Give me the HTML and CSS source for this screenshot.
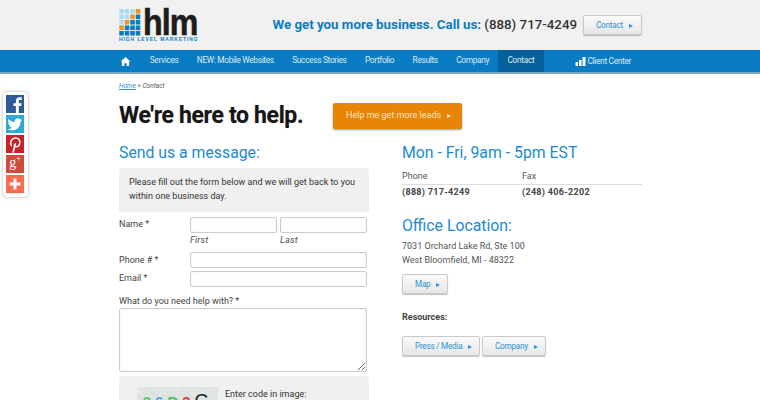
FILE: index.html
```html
<!DOCTYPE html>
<html lang="en">
<head>
    <meta charset="UTF-8">
    <title>Contact - High Level Marketing</title>
    <link rel="stylesheet" href="styles.css">
</head>
<body>
    <!-- share buttons float over the left margin -->
    <aside class="share">
        <a class="share-btn fb" href="#"><svg viewBox="0 0 18 18"><path d="M12.800 18v-7h2.400l.4-2.800h-2.800V6.300c0-.8.3-1.300 1.400-1.300h1.500V2.300c-.4 0-1.200-.1-2.100-.1-2.200 0-3.700 1.300-3.700 3.700v2.300H7.500V11h2.400v7z" fill="#fff"/></svg></a>
        <a class="share-btn tw" href="#"><svg viewBox="0 0 18 18"><path d="M16 4.700c-.5.200-1.100.4-1.700.5.600-.4 1.100-.9 1.300-1.600-.6.300-1.200.6-1.900.7a3 3 0 0 0-5.100 2.700C6.100 6.900 3.900 5.700 2.500 4c-.8 1.300-.4 3.100.9 4-.5 0-.9-.1-1.300-.4 0 1.400 1 2.700 2.400 3-.4.100-.9.100-1.300 0 .4 1.200 1.500 2 2.800 2.100A6 6 0 0 1 1.500 14c1.300.8 2.900 1.300 4.600 1.300 5.600 0 8.700-4.700 8.500-8.900.6-.4 1-.9 1.400-1.700z" fill="#fff"/></svg></a>
        <a class="share-btn pin" href="#"><svg viewBox="0 0 18 18"><path d="M7.200 17l2-8.300M5.300 10.500C3.500 7 5.800 3 9.500 3c2.900 0 4.500 2 4.300 4.500-.2 2.500-1.600 4.300-3.500 4.300-1.100 0-1.900-.7-2-1.500" fill="none" stroke="#fff" stroke-width="1.600" stroke-linecap="round"/></svg></a>
        <a class="share-btn gp" href="#">g<sup>+</sup></a>
        <a class="share-btn more" href="#"><svg viewBox="0 0 18 18"><path d="M7.500 3.500h3v4h4v3h-4v4h-3v-4h-4v-3h4z" fill="#fff"/></svg></a>
    </aside>

    <header class="top">
        <div class="wrap top-inner">
            <a class="logo" href="#">
                <div class="logo-row">
                    <svg class="logo-grid" width="22" height="27" viewBox="0 0 23.500 29.500">
                        <g fill="#a9dcf2">
                            <rect x="0" y="0" width="5" height="5"/><rect x="6" y="0" width="5" height="5"/><rect x="12" y="0" width="5" height="5"/>
                            <rect x="0" y="6" width="5" height="5"/><rect x="6" y="6" width="5" height="5"/>
                            <rect x="0" y="12" width="5" height="5"/>
                        </g>
                        <g fill="#f0961c">
                            <rect x="18" y="0" width="5" height="5"/><rect x="12" y="6" width="5" height="5"/><rect x="6" y="12" width="5" height="5"/><rect x="0" y="18" width="5" height="5"/>
                        </g>
                        <g fill="#0a7cc4">
                            <rect x="18" y="6" width="5" height="5"/><rect x="12" y="12" width="5" height="5"/><rect x="18" y="12" width="5" height="5"/>
                            <rect x="6" y="18" width="5" height="5"/><rect x="12" y="18" width="5" height="5"/><rect x="18" y="18" width="5" height="5"/>
                            <rect x="0" y="24" width="5" height="5"/><rect x="6" y="24" width="5" height="5"/><rect x="12" y="24" width="5" height="5"/><rect x="18" y="24" width="5" height="5"/>
                        </g>
                    </svg>
                    <span class="logo-word">hlm</span>
                </div>
                <div class="logo-tag">HIGH LEVEL MARKETING</div>
            </a>
            <div class="top-right">
                <p class="callout">We get you more business. Call us: <span class="callout-num">(888) 717-4249</span></p>
                <a class="btn btn-top" href="#">Contact<i class="arrow"></i></a>
            </div>
        </div>
    </header>

    <nav class="navbar">
        <div class="wrap nav-inner">
            <a class="nav-home" href="#"><svg width="11" height="9" viewBox="0 0 12 11"><path d="M6 0L0 5.500h1.600V11h3V7.500h2.800V11h3V5.500H12z" fill="#fff"/></svg></a>
            <a class="nav-link" href="#">Services</a>
            <a class="nav-link" href="#">NEW: Mobile Websites</a>
            <a class="nav-link" href="#">Success Stories</a>
            <a class="nav-link" href="#">Portfolio</a>
            <a class="nav-link" href="#">Results</a>
            <a class="nav-link" href="#">Company</a>
            <a class="nav-link active" href="#">Contact</a>
            <a class="nav-client" href="#"><svg width="11" height="9" viewBox="0 0 10 9"><path d="M0 5h2.500v4H0zM3.500 3H6v6H3.500zM7 0h3v9H7z" fill="#fff"/></svg>Client Center</a>
        </div>
    </nav>

    <main class="wrap">
        <div class="crumbs"><a href="#">Home</a> &gt; Contact</div>
        <div class="title-row">
            <h1>We're here to help.</h1>
            <a class="btn-leads" href="#">Help me get more leads<i class="arrow"></i></a>
        </div>
        <div class="columns">
            <section class="col-left">
                <h2>Send us a message:</h2>
                <div class="intro">Please fill out the form below and we will get back to you within one business day.</div>
                <form>
                    <div class="form-row name-row">
                        <label>Name *</label>
                        <div class="name-field"><input type="text"><em>First</em></div>
                        <div class="name-field"><input type="text"><em>Last</em></div>
                    </div>
                    <div class="form-row phone-row">
                        <label>Phone # *</label>
                        <input type="text">
                    </div>
                    <div class="form-row email-row">
                        <label>Email *</label>
                        <input type="text">
                    </div>
                    <label class="help-label">What do you need help with? *</label>
                    <textarea></textarea>
                    <div class="captcha">
                        <div class="captcha-img"><span class="c1">2</span><span class="c2">6</span><span class="c3">D</span><span class="c4">3</span><span class="c5">C</span></div>
                        <span>Enter code in image:</span>
                    </div>
                </form>
            </section>
            <section class="col-right">
                <h2>Mon - Fri, 9am - 5pm EST</h2>
                <div class="contact-table">
                    <div class="contact-head"><span>Phone</span><span>Fax</span></div>
                    <div class="contact-nums"><span>(888) 717-4249</span><span>(248) 406-2202</span></div>
                </div>
                <h2 class="office">Office Location:</h2>
                <p class="address">7031 Orchard Lake Rd, Ste 100<br>West Bloomfield, MI - 48322</p>
                <a class="btn btn-map" href="#">Map<i class="arrow"></i></a>
                <h3>Resources:</h3>
                <div class="res-btns">
                    <a class="btn btn-press" href="#">Press / Media<i class="arrow"></i></a>
                    <a class="btn btn-company" href="#">Company<i class="arrow"></i></a>
                </div>
            </section>
        </div>
    </main>
</body>
</html>
```

FILE: styles.css
```css
* {
    margin: 0;
    padding: 0;
    box-sizing: border-box;
}

html, body {
    height: 400px;
    overflow: hidden;
}

body {
    font-family: Roboto, "Liberation Sans", sans-serif;
    font-size: 9px;
    line-height: 14px;
    color: #444;
    background-color: #fff;
}

a {
    text-decoration: none;
}

.wrap {
    width: 523px;
    margin-left: 119px;
}

/* header */
.top {
    height: 50px;
    background-color: #f1f1f1;
}

.top-inner {
    display: flex;
    justify-content: space-between;
    padding-top: 9px;
}

.logo {
    display: block;
    width: 80px;
}

.logo-row {
    display: flex;
    height: 27px;
}

.logo-grid {
    flex: none;
}

.logo-word {
    font-family: "Liberation Sans", sans-serif;
    font-weight: bold;
    font-size: 37px;
    line-height: 27px;
    letter-spacing: -1px;
    color: #1d1d1d;
    margin-left: 2px;
    transform: scaleX(0.87);
    transform-origin: left center;
    -webkit-text-stroke: 0.6px #1d1d1d;
}

.logo-tag {
    font-family: "Liberation Sans", sans-serif;
    font-weight: bold;
    font-size: 5px;
    line-height: 5px;
    letter-spacing: 0.9px;
    color: #0a7cc4;
    margin-top: 1px;
    white-space: nowrap;
}

.top-right {
    display: flex;
    align-items: flex-start;
    gap: 6px;
}

.callout {
    font-size: 13.3px;
    font-weight: 700;
    line-height: 32px;
    color: #0a7cc4;
    white-space: nowrap;
}

.callout-num {
    color: #333;
    font-weight: 500;
}

/* buttons */
.btn {
    display: inline-block;
    height: 20px;
    line-height: 18px;
    font-size: 8.2px;
    letter-spacing: -0.25px;
    color: #2a93d5;
    background: linear-gradient(#fbfbfb, #e6e6e6);
    border: 1px solid #c9c9c9;
    border-radius: 2px;
    box-shadow: 0 1px 1px rgba(0, 0, 0, 0.25);
    white-space: nowrap;
}

.arrow {
    display: inline-block;
    margin-left: 6px;
    border-left: 4px solid currentColor;
    border-top: 2.5px solid transparent;
    border-bottom: 2.5px solid transparent;
}

.btn-top {
    width: 59px;
    margin-top: 6px;
    padding-left: 12px;
}

.btn-map {
    display: block;
    width: 46px;
    margin-top: 7px;
    padding-left: 12px;
}

.btn-press {
    width: 78px;
    padding-left: 12px;
}

.btn-company {
    width: 64px;
    padding-left: 12px;
}

/* nav */
.navbar {
    height: 24px;
    background-color: #0a7cc4;
    border-bottom: 2px solid #7aa6c2;
}

.nav-inner {
    display: flex;
    height: 22px;
}

.nav-home {
    display: flex;
    align-items: center;
    padding-left: 1px;
    width: 21.5px;
}

.nav-link {
    padding: 0 9.2px;
    line-height: 21px;
    font-size: 8.3px;
    letter-spacing: -0.31px;
    color: #dcebf5;
    white-space: nowrap;
}

.nav-link.active {
    background-color: #05609b;
}

.nav-client {
    display: flex;
    align-items: center;
    gap: 2px;
    margin-left: 31px;
    font-size: 8.3px;
    letter-spacing: -0.31px;
    color: #dcebf5;
    white-space: nowrap;
}

/* title area */
.crumbs {
    margin-top: 7px;
    font-size: 6.5px;
    line-height: 11px;
    font-style: italic;
    color: #555;
}

.crumbs a {
    color: #2a93d5;
    text-decoration: underline;
}

.title-row {
    display: flex;
    align-items: center;
    margin-top: 10px;
    height: 27px;
}

h1 {
    font-size: 23px;
    line-height: 27px;
    font-weight: 700;
    letter-spacing: -0.35px;
    color: #161616;
    text-shadow: 0 0 1px rgba(0, 0, 0, 0.3);
    width: 214px;
    white-space: nowrap;
}

.btn-leads {
    display: block;
    width: 129px;
    height: 26px;
    padding-left: 13px;
    line-height: 25px;
    font-size: 9px;
    color: #fbe6cc;
    background-color: #e88504;
    border-radius: 2px;
    box-shadow: 0 1px 2px rgba(0, 0, 0, 0.4);
    white-space: nowrap;
}

/* columns */
.columns {
    display: flex;
    gap: 33px;
    margin-top: 11px;
}

.col-left {
    width: 250px;
    flex: none;
}

.col-right {
    flex: 1;
}

h2 {
    height: 24px;
    font-size: 15.8px;
    font-weight: 400;
    line-height: 26px;
    color: #1b8ad0;
    white-space: nowrap;
}

.intro {
    margin-top: 4px;
    height: 44px;
    padding: 8px 10px 0;
    line-height: 13.500px;
    background-color: #f0f0f0;
    border-radius: 2px;
    color: #333;
}

/* form */
.form-row {
    display: flex;
    gap: 3px;
}

.form-row label {
    width: 68px;
    flex: none;
}

.form-row > input {
    width: 177px;
}

input, textarea {
    display: block;
    height: 16px;
    background-color: #fff;
    border: 1px solid #ccc;
    border-radius: 2px;
    box-shadow: inset 0 0 1px rgba(0, 0, 0, 0.2);
}

.name-row {
    margin-top: 5px;
}

.phone-row {
    margin-top: 6px;
}

.phone-row label {
    padding-top: 1px;
}

.email-row {
    margin-top: 3px;
}

.name-field {
    width: 87px;
}

.name-field input {
    width: 87px;
}

.name-field em {
    display: block;
    font-size: 9.5px;
    line-height: 13px;
    color: #555;
}

.help-label {
    display: block;
    margin-top: 7px;
}

textarea {
    width: 248px;
    height: 64px;
    resize: both;
}

.captcha {
    display: flex;
    gap: 7px;
    margin-top: 4px;
    height: 60px;
    padding: 11px 18px;
    background-color: #f0f0f0;
    border-radius: 2px;
    color: #333;
}

.captcha-img {
    width: 81px;
    height: 40px;
    background-color: #e4e8e6;
    background-image: repeating-linear-gradient(45deg, #d5dde0 0 1px, transparent 1px 3px);
    font-family: "Liberation Sans", sans-serif;
    font-size: 15px;
    font-weight: bold;
    line-height: 27px;
    text-align: center;
    letter-spacing: 4px;
    white-space: nowrap;
}

.c1 { color: #5cc86a; }
.c2 { color: #4aa3d8; }
.c3 { color: #4cc46a; }
.c4 { color: #d8403a; }
.c5 { color: #1a1a1a; font-size: 19px; font-weight: normal; }

/* right column */
.contact-table {
    padding-top: 6px;
}

.contact-head, .contact-nums {
    display: flex;
    line-height: 13px;
}

.contact-head {
    border-bottom: 1px solid #ddd;
    color: #555;
    padding-bottom: 1px;
}

.contact-nums {
    padding-top: 1px;
    font-weight: 700;
    color: #444;
    letter-spacing: 0.3px;
}

.contact-head span, .contact-nums span {
    width: 120px;
}

.office {
    margin-top: 14px;
}

.address {
    margin-top: 3px;
    line-height: 13.500px;
    color: #555;
}

h3 {
    margin-top: 16px;
    font-size: 9px;
    font-weight: 700;
    color: #444;
}

.res-btns {
    display: flex;
    gap: 2px;
    margin-top: 12px;
}

/* share bar */
.share {
    position: absolute;
    left: 3px;
    top: 92px;
    width: 25px;
    height: 105px;
    padding: 3px;
    display: flex;
    flex-direction: column;
    gap: 2px;
    background-color: #fff;
    border-radius: 4px;
    box-shadow: 0 0 3px rgba(0, 0, 0, 0.35);
}

.share-btn {
    display: block;
    flex: none;
    width: 18px;
    height: 18px;
    font-family: "Liberation Serif", serif;
    font-size: 14px;
    line-height: 15px;
    text-align: center;
    color: #fff;
}

.share-btn svg {
    display: block;
    width: 18px;
    height: 18px;
}

.share-btn sup {
    font-size: 8px;
    line-height: 0;
}

.fb { background-color: #2d5b9a; }
.tw { background-color: #2ba9d9; }
.pin { background-color: #c92228; }
.gp { background-color: #cf4b3a; }
.more { background-color: #fb6a4e; }
```
